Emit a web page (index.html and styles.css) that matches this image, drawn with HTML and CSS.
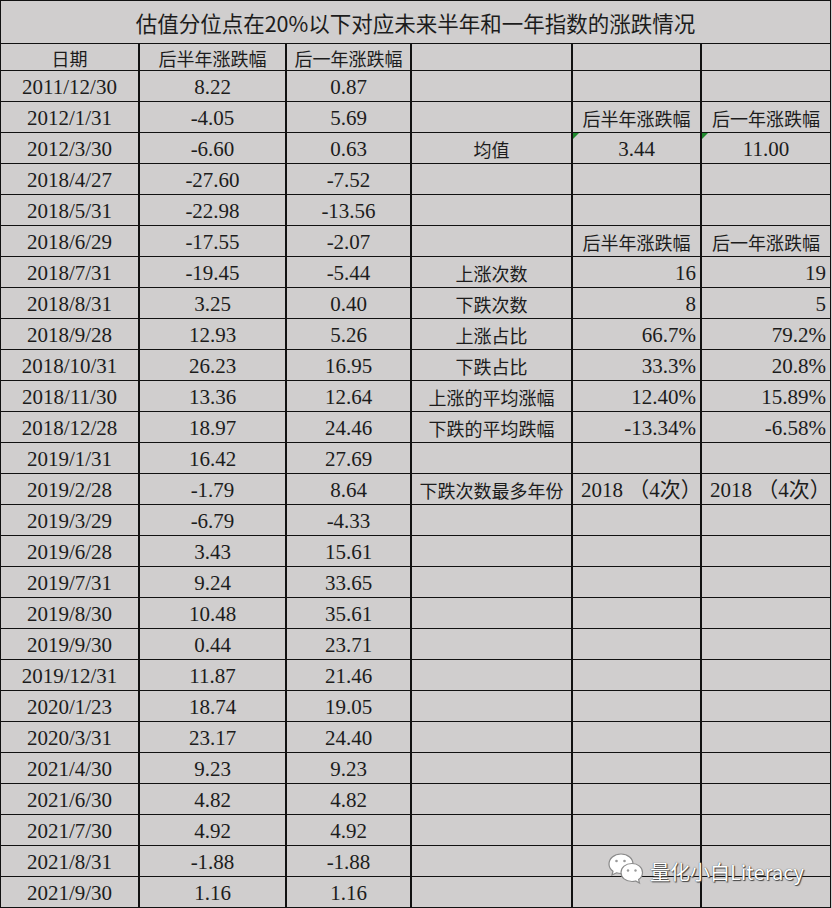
FILE: index.html
```html
<!DOCTYPE html>
<html lang="zh-CN">
<head>
<meta charset="utf-8">
<title>估值分位点</title>
<link rel="stylesheet" href="styles.css">
</head>
<body>
<div class="sheet">
  <div class="cell title">估值分位点在20%以下对应未来半年和一年指数的涨跌情况</div>

  <div class="cell head">日期</div><div class="cell head">后半年涨跌幅</div><div class="cell head">后一年涨跌幅</div><div class="cell"></div><div class="cell"></div><div class="cell"></div>

  <div class="cell">2011/12/30</div><div class="cell">8.22</div><div class="cell">0.87</div><div class="cell"></div><div class="cell"></div><div class="cell"></div>
  <div class="cell">2012/1/31</div><div class="cell">-4.05</div><div class="cell">5.69</div><div class="cell"></div><div class="cell head">后半年涨跌幅</div><div class="cell head">后一年涨跌幅</div>
  <div class="cell">2012/3/30</div><div class="cell">-6.60</div><div class="cell">0.63</div><div class="cell label">均值</div><div class="cell flag">3.44</div><div class="cell flag">11.00</div>
  <div class="cell">2018/4/27</div><div class="cell">-27.60</div><div class="cell">-7.52</div><div class="cell"></div><div class="cell"></div><div class="cell"></div>
  <div class="cell">2018/5/31</div><div class="cell">-22.98</div><div class="cell">-13.56</div><div class="cell"></div><div class="cell"></div><div class="cell"></div>
  <div class="cell">2018/6/29</div><div class="cell">-17.55</div><div class="cell">-2.07</div><div class="cell"></div><div class="cell head">后半年涨跌幅</div><div class="cell head">后一年涨跌幅</div>
  <div class="cell">2018/7/31</div><div class="cell">-19.45</div><div class="cell">-5.44</div><div class="cell label">上涨次数</div><div class="cell right">16</div><div class="cell right">19</div>
  <div class="cell">2018/8/31</div><div class="cell">3.25</div><div class="cell">0.40</div><div class="cell label">下跌次数</div><div class="cell right">8</div><div class="cell right">5</div>
  <div class="cell">2018/9/28</div><div class="cell">12.93</div><div class="cell">5.26</div><div class="cell label">上涨占比</div><div class="cell right">66.7%</div><div class="cell right">79.2%</div>
  <div class="cell">2018/10/31</div><div class="cell">26.23</div><div class="cell">16.95</div><div class="cell label">下跌占比</div><div class="cell right">33.3%</div><div class="cell right">20.8%</div>
  <div class="cell">2018/11/30</div><div class="cell">13.36</div><div class="cell">12.64</div><div class="cell label">上涨的平均涨幅</div><div class="cell right">12.40%</div><div class="cell right">15.89%</div>
  <div class="cell">2018/12/28</div><div class="cell">18.97</div><div class="cell">24.46</div><div class="cell label">下跌的平均跌幅</div><div class="cell right">-13.34%</div><div class="cell right">-6.58%</div>
  <div class="cell">2019/1/31</div><div class="cell">16.42</div><div class="cell">27.69</div><div class="cell"></div><div class="cell"></div><div class="cell"></div>
  <div class="cell">2019/2/28</div><div class="cell">-1.79</div><div class="cell">8.64</div><div class="cell label">下跌次数最多年份</div><div class="cell left">2018 （4次）</div><div class="cell left">2018 （4次）</div>
  <div class="cell">2019/3/29</div><div class="cell">-6.79</div><div class="cell">-4.33</div><div class="cell"></div><div class="cell"></div><div class="cell"></div>
  <div class="cell">2019/6/28</div><div class="cell">3.43</div><div class="cell">15.61</div><div class="cell"></div><div class="cell"></div><div class="cell"></div>
  <div class="cell">2019/7/31</div><div class="cell">9.24</div><div class="cell">33.65</div><div class="cell"></div><div class="cell"></div><div class="cell"></div>
  <div class="cell">2019/8/30</div><div class="cell">10.48</div><div class="cell">35.61</div><div class="cell"></div><div class="cell"></div><div class="cell"></div>
  <div class="cell">2019/9/30</div><div class="cell">0.44</div><div class="cell">23.71</div><div class="cell"></div><div class="cell"></div><div class="cell"></div>
  <div class="cell">2019/12/31</div><div class="cell">11.87</div><div class="cell">21.46</div><div class="cell"></div><div class="cell"></div><div class="cell"></div>
  <div class="cell">2020/1/23</div><div class="cell">18.74</div><div class="cell">19.05</div><div class="cell"></div><div class="cell"></div><div class="cell"></div>
  <div class="cell">2020/3/31</div><div class="cell">23.17</div><div class="cell">24.40</div><div class="cell"></div><div class="cell"></div><div class="cell"></div>
  <div class="cell">2021/4/30</div><div class="cell">9.23</div><div class="cell">9.23</div><div class="cell"></div><div class="cell"></div><div class="cell"></div>
  <div class="cell">2021/6/30</div><div class="cell">4.82</div><div class="cell">4.82</div><div class="cell"></div><div class="cell"></div><div class="cell"></div>
  <div class="cell">2021/7/30</div><div class="cell">4.92</div><div class="cell">4.92</div><div class="cell"></div><div class="cell"></div><div class="cell"></div>
  <div class="cell">2021/8/31</div><div class="cell">-1.88</div><div class="cell">-1.88</div><div class="cell"></div><div class="cell"></div><div class="cell"></div>
  <div class="cell">2021/9/30</div><div class="cell">1.16</div><div class="cell">1.16</div><div class="cell"></div><div class="cell"></div><div class="cell"></div>

  <div class="watermark">
    <svg class="wx" width="40" height="34" viewBox="0 0 40 34">
      <path d="M15 2 C8 2 3 6.5 3 12 C3 15 4.5 17.5 7 19.2 L6 23 L10.5 20.8 C12 21.3 13.5 21.5 15 21.5 C22 21.5 27 17 27 12 C27 6.5 22 2 15 2 Z" fill="#fff" stroke="#8a8a8a" stroke-width="1.2"/>
      <circle cx="10.5" cy="9" r="1.3" fill="#9a9a9a"/>
      <circle cx="18.5" cy="9" r="1.3" fill="#9a9a9a"/>
      <path d="M26 11.5 C19.5 11.5 15 15.5 15 20.5 C15 25.5 19.5 29.5 26 29.5 C27.3 29.5 28.5 29.3 29.6 29 L33.5 31 L32.6 27.6 C35 26 36.5 23.5 36.5 20.5 C36.5 15.5 32 11.5 26 11.5 Z" fill="#fff" stroke="#8a8a8a" stroke-width="1.2"/>
      <circle cx="22" cy="18.5" r="1.2" fill="#9a9a9a"/>
      <circle cx="29.5" cy="18.5" r="1.2" fill="#9a9a9a"/>
    </svg>
    <span class="wm-text">量化小白Literacy</span>
  </div>
</div>
</body>
</html>
```

FILE: styles.css
```css
html, body {
  margin: 0;
  padding: 0;
  background: #d0cece;
}

.sheet {
  position: relative;
  width: 829px;
  padding: 1px;
  background: #111;
  display: grid;
  grid-template-columns: 137px 145px 123px 159px 127px 128px;
  grid-template-rows: 42px 26px repeat(27, 30px);
  column-gap: 2px;
  row-gap: 1px;
}

.cell {
  background: #d0cece;
  display: flex;
  align-items: center;
  justify-content: center;
  font-family: "Liberation Serif", "Noto Sans CJK SC", serif;
  font-size: 21px;
  line-height: 1;
  padding-top: 3px;
  box-sizing: border-box;
  color: #1c1c1c;
  white-space: nowrap;
  position: relative;
}

.title {
  grid-column: 1 / -1;
  font-family: "Noto Sans CJK SC", sans-serif;
  font-size: 21.5px;
  padding-top: 1px;
}

.head,
.label {
  font-family: "Noto Sans CJK SC", sans-serif;
  font-size: 18px;
  padding-top: 1px;
}

.right {
  justify-content: flex-end;
  padding-right: 4px;
}

.left {
  justify-content: flex-start;
  padding-left: 8px;
}

.flag::before {
  content: "";
  position: absolute;
  top: 0;
  left: 0;
  border-top: 6px solid #1f8a2e;
  border-right: 6px solid transparent;
}

.watermark {
  position: absolute;
  left: 606px;
  top: 851px;
  display: flex;
  align-items: center;
  gap: 4px;
}

.wm-text {
  font-family: "Noto Sans CJK SC", sans-serif;
  font-size: 20px;
  color: #fff;
  margin-top: 6px;
  text-shadow: 0 0 1px #333, 1px 1px 1px #444;
}
```
